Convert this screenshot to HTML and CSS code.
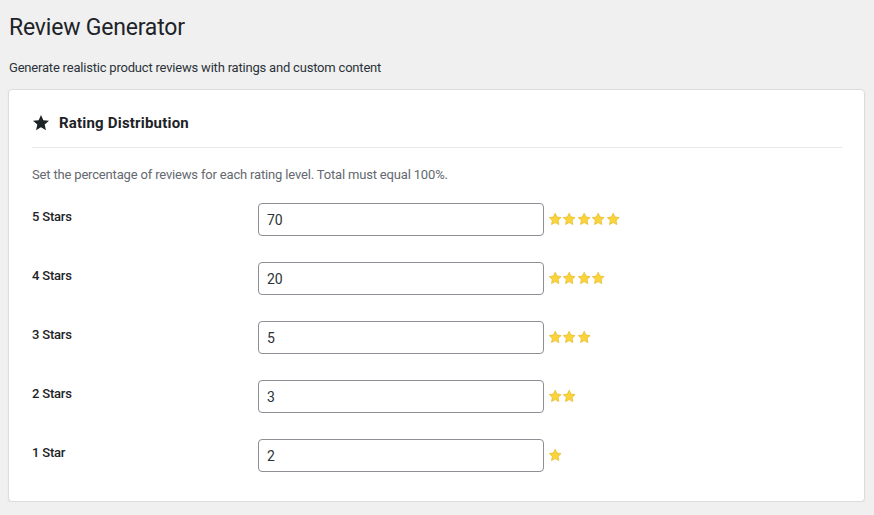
FILE: index.html
```html
<!DOCTYPE html>
<html lang="en">
<head>
<meta charset="utf-8">
<title>Review Generator</title>
<link rel="stylesheet" href="styles.css">
</head>
<body>
<div class="wrap">
  <h1 class="page-title">Review Generator</h1>
  <p class="page-desc">Generate realistic product reviews with ratings and custom content</p>
  <div class="card">
    <div class="card-header">
      <svg class="head-icon" viewBox="0 0 20 20" width="18" height="18"><path d="M10 1.2l2.6 5.8 6.3.6-4.8 4.2 1.4 6.2L10 14.8 4.5 18l1.4-6.2L1.1 7.6l6.3-.6z" fill="#1d2327"/></svg>
      <h2 class="card-title">Rating Distribution</h2>
    </div>
    <p class="help">Set the percentage of reviews for each rating level. Total must equal 100%.</p>
    <div class="rows">
      <div class="row">
        <label class="row-label">5 Stars</label>
        <div class="field">
          <input class="num" type="text" value="70">
          <span class="stars"><svg viewBox="0 0 14 14"><use href="#s"/></svg><svg viewBox="0 0 14 14"><use href="#s"/></svg><svg viewBox="0 0 14 14"><use href="#s"/></svg><svg viewBox="0 0 14 14"><use href="#s"/></svg><svg viewBox="0 0 14 14"><use href="#s"/></svg></span>
        </div>
      </div>
      <div class="row">
        <label class="row-label">4 Stars</label>
        <div class="field">
          <input class="num" type="text" value="20">
          <span class="stars"><svg viewBox="0 0 14 14"><use href="#s"/></svg><svg viewBox="0 0 14 14"><use href="#s"/></svg><svg viewBox="0 0 14 14"><use href="#s"/></svg><svg viewBox="0 0 14 14"><use href="#s"/></svg></span>
        </div>
      </div>
      <div class="row">
        <label class="row-label">3 Stars</label>
        <div class="field">
          <input class="num" type="text" value="5">
          <span class="stars"><svg viewBox="0 0 14 14"><use href="#s"/></svg><svg viewBox="0 0 14 14"><use href="#s"/></svg><svg viewBox="0 0 14 14"><use href="#s"/></svg></span>
        </div>
      </div>
      <div class="row">
        <label class="row-label">2 Stars</label>
        <div class="field">
          <input class="num" type="text" value="3">
          <span class="stars"><svg viewBox="0 0 14 14"><use href="#s"/></svg><svg viewBox="0 0 14 14"><use href="#s"/></svg></span>
        </div>
      </div>
      <div class="row">
        <label class="row-label">1 Star</label>
        <div class="field">
          <input class="num" type="text" value="2">
          <span class="stars"><svg viewBox="0 0 14 14"><use href="#s"/></svg></span>
        </div>
      </div>
    </div>
  </div>
</div>
<svg width="0" height="0" class="defs">
  <defs>
    <path id="s" d="M7 1.2l1.75 3.7 4 .5-2.95 2.8.75 4L7 10.3 3.45 12.2l.75-4L1.25 5.4l4-.5z" fill="#fbd33a" stroke="#e3b928" stroke-width=".7" stroke-linejoin="round"/>
  </defs>
</svg>
</body>
</html>
```
FILE: styles.css
```css
* { box-sizing: border-box; }
body {
  margin: 0;
  background: #f0f0f1;
  font-family: Roboto, "Liberation Sans", sans-serif;
  color: #1d2327;
}
.wrap {
  padding: 13px 9px 0 8px;
}
.page-title {
  margin: 0 0 0 1px;
  font-size: 23px;
  font-weight: 400;
  line-height: 30px;
  letter-spacing: -0.2px;
  color: #1d2327;
}
.page-desc {
  margin: 15px 0 0 1px;
  font-size: 13px;
  line-height: 20px;
  letter-spacing: -0.2px;
  color: #2c3338;
}
.card {
  margin-top: 11px;
  background: #fff;
  border: 1px solid #dcdcde;
  border-radius: 4px;
  box-shadow: 0 1px 2px rgba(0,0,0,.06);
  padding: 24px 22px 16px 23px;
}
.card-header {
  display: flex;
  align-items: center;
  gap: 9px;
  padding-bottom: 15px;
  border-bottom: 1px solid #e8e8e9;
}
.head-icon { display: block; }
.card-title {
  margin: 0;
  font-size: 15px;
  font-weight: 700;
  line-height: 18px;
  letter-spacing: 0.2px;
  color: #1d2327;
}
.help {
  margin: 17px 0 0;
  font-size: 13px;
  line-height: 20px;
  letter-spacing: -0.17px;
  color: #646970;
}
.rows {
  margin-top: 5px;
}
.row {
  display: grid;
  grid-template-columns: 226px auto;
  padding: 13px 0;
}
.row-label {
  padding-top: 4px;
  font-size: 13px;
  line-height: 20px;
  font-weight: 500;
  letter-spacing: -0.2px;
  color: #1d2327;
}
.field {
  display: flex;
  align-items: center;
  gap: 4px;
}
.num {
  width: 286px;
  height: 33px;
  margin: 0;
  padding: 0 8px;
  border: 1px solid #8c8f94;
  border-radius: 4px;
  background: #fff;
  font-family: inherit;
  font-size: 14px;
  color: #2c3338;
  outline: none;
}
.stars {
  display: flex;
}
.stars svg {
  width: 14.4px;
  height: 14.4px;
  display: block;
}
.defs { position: absolute; }
```
